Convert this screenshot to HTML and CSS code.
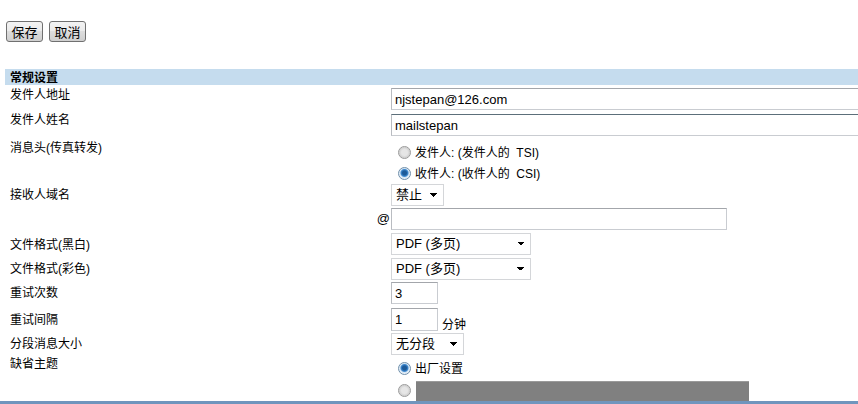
FILE: index.html
```html
<!DOCTYPE html>
<html lang="zh-CN">
<head>
<meta charset="utf-8">
<title>常规设置</title>
<link rel="stylesheet" href="styles.css">
</head>
<body>
<div class="toolbar">
  <button class="btn">保存</button>
  <button class="btn">取消</button>
</div>
<div class="section">
  <div class="section-title">常规设置</div>
  <div class="form">
    <div class="row r1">
      <div class="label">发件人地址</div><div class="at"></div>
      <div class="field"><input class="text wide" type="text" value="njstepan@126.com"></div>
    </div>
    <div class="row r2">
      <div class="label">发件人姓名</div><div class="at"></div>
      <div class="field"><input class="text wide focus" type="text" value="mailstepan"></div>
    </div>
    <div class="row r3">
      <div class="label">消息头(传真转发)</div><div class="at"></div>
      <div class="field radios">
        <label class="radio-line"><span class="radio"></span>发件人: (发件人的&nbsp; TSI)</label>
        <label class="radio-line"><span class="radio on"></span>收件人: (收件人的&nbsp; CSI)</label>
      </div>
    </div>
    <div class="row r4">
      <div class="label">接收人域名</div><div class="at"></div>
      <div class="field"><div class="select s-short"><span>禁止</span><span class="caret"></span></div></div>
    </div>
    <div class="row r5">
      <div class="label"></div><div class="at">@</div>
      <div class="field"><input class="text domain" type="text" value=""></div>
    </div>
    <div class="row r6">
      <div class="label">文件格式(黑白)</div><div class="at"></div>
      <div class="field"><div class="select s-pdf"><span>PDF (多页)</span><span class="caret"></span></div></div>
    </div>
    <div class="row r7">
      <div class="label">文件格式(彩色)</div><div class="at"></div>
      <div class="field"><div class="select s-pdf"><span>PDF (多页)</span><span class="caret"></span></div></div>
    </div>
    <div class="row r8">
      <div class="label">重试次数</div><div class="at"></div>
      <div class="field"><input class="text small" type="text" value="3"></div>
    </div>
    <div class="row r9">
      <div class="label">重试间隔</div><div class="at"></div>
      <div class="field inline"><input class="text small tall" type="text" value="1"><span class="unit">分钟</span></div>
    </div>
    <div class="row r10">
      <div class="label">分段消息大小</div><div class="at"></div>
      <div class="field"><div class="select s-seg"><span>无分段</span><span class="caret"></span></div></div>
    </div>
    <div class="row r11">
      <div class="label">缺省主题</div><div class="at"></div>
      <div class="field radios">
        <label class="radio-line"><span class="radio on"></span>出厂设置</label>
        <label class="radio-line"><span class="radio"></span><span class="gray-box"></span></label>
      </div>
    </div>
  </div>
</div>
<div class="footer"></div>
</body>
</html>
```
FILE: styles.css
```css
html { overflow: hidden; }
body {
  margin: 0;
  background: #fff;
  color: #000;
  font-family: "Liberation Sans", "Noto Sans CJK SC", sans-serif;
  font-size: 12px;
  line-height: 14px;
  width: 858px;
  height: 404px;
  overflow: hidden;
}
.toolbar {
  height: 69px;
  box-sizing: border-box;
  padding: 21px 0 0 6px;
  display: flex;
  align-items: flex-start;
  gap: 6px;
}
.btn {
  box-sizing: border-box;
  margin: 0;
  width: 37px;
  height: 21px;
  padding: 0;
  border: 1px solid #707070;
  border-radius: 3px;
  background: linear-gradient(#f3f3f3 0%, #ebebeb 45%, #dddddd 50%, #cfcfcf 100%);
  font-family: "Noto Sans CJK SC", sans-serif;
  font-size: 13px;
  line-height: 17px;
  color: #000;
}
.section { margin-left: 5px; }
.section-title {
  height: 16px;
  background: #c5dcee;
  font-weight: bold;
  padding-left: 5px;
  line-height: 16px;
  font-family: "Noto Sans CJK SC", sans-serif;
}
.row {
  display: grid;
  grid-template-columns: 371px 15px 1fr;
  align-items: start;
  overflow: visible;
}
.label { padding-left: 5px; white-space: nowrap; }
.at { text-align: right; padding-right: 1px; font-size: 13px; }
.field { display: flex; align-items: flex-start; }
.radios { flex-direction: column; }
.inline { align-items: flex-end; }

.r1 { height: 27px; } .r1 .label { padding-top: 3px; } .r1 .field { padding-top: 3px; }
.r2 { height: 26px; } .r2 .label { padding-top: 1px; } .r2 .field { padding-top: 2px; }
.r3 { height: 45px; } .r3 .label { padding-top: 3px; } .r3 .field { padding-top: 4px; }
.r4 { height: 24px; } .r4 .label { padding-top: 5px; } .r4 .field { padding-top: 1px; }
.r5 { height: 25px; } .r5 .at { padding-top: 5px; } .r5 .field { padding-top: 1px; }
.r6 { height: 25px; } .r6 .label { padding-top: 6px; } .r6 .field { padding-top: 1px; }
.r7 { height: 24px; } .r7 .label { padding-top: 5px; } .r7 .field { padding-top: 1px; }
.r8 { height: 26px; } .r8 .label { padding-top: 5px; } .r8 .field { padding-top: 1px; }
.r9 { height: 25px; } .r9 .label { padding-top: 6px; } .r9 .field { padding-top: 1px; }
.r10 { height: 24px; } .r10 .label { padding-top: 5px; } .r10 .field { padding-top: 1px; }
.r11 { height: 45px; } .r11 .label { padding-top: 1px; } .r11 .field { padding-top: 2px; gap: 1px; }

.text {
  box-sizing: border-box;
  height: 22px;
  margin: 0;
  padding: 0 3px;
  border: 1px solid #c9ccd1;
  border-top-color: #a3a6ab;
  border-left-color: #b9bcc1;
  background: #fff;
  font-family: "Liberation Sans", sans-serif;
  font-size: 13px;
  color: #000;
  outline: none;
}
.text.focus { border-top-color: #5c6f7a; }
.wide { width: 480px; }
.domain { width: 336px; }
.small { width: 47px; }
.tall { height: 23px; }
.unit { margin-left: 4px; line-height: 14px; font-family: "Noto Sans CJK SC", sans-serif; }

.select {
  box-sizing: border-box;
  height: 22px;
  border: 1px solid #d4d6d9;
  background: #fff;
  display: flex;
  align-items: center;
  justify-content: space-between;
  padding: 0 5px 0 4px;
  font-size: 13px;
}
.s-short { width: 53px; }
.s-pdf { width: 140px; }
.s-seg { width: 73px; }
.caret {
  width: 8px;
  height: 4px;
  background:
    linear-gradient(to bottom left, #000 50%, transparent 50%) left / 4px 4px no-repeat,
    linear-gradient(to bottom right, #000 50%, transparent 50%) right / 4px 4px no-repeat;
}

.radio-line {
  height: 21px;
  display: flex;
  align-items: center;
  padding-left: 7px;
  gap: 4px;
  font-family: "Liberation Sans", "Noto Sans CJK SC", sans-serif;
  white-space: nowrap;
}
.radio {
  box-sizing: border-box;
  width: 13px;
  height: 13px;
  border-radius: 50%;
  border: 1px solid #9a9a9a;
  background: radial-gradient(circle at 50% 50%, #e6e6e6 0 3px, #d2d2d2 5px, #f4f4f4 6px);
  flex: none;
}
.radio.on {
  border-color: #6f8fab;
  background: radial-gradient(circle at 50% 45%, #1c5a99 0 2px, #3f8ad1 3.5px, #d6e6f4 4.5px, #eef4fa 6px);
}
.gray-box {
  display: block;
  width: 333px;
  height: 20px;
  background: #808080;
  border-top: 1px solid #9a9a9a;
  box-sizing: border-box;
  margin-left: 1px;
  margin-top: 1px;
}
.footer {
  height: 3px;
  background: #7095bd;
}
```
